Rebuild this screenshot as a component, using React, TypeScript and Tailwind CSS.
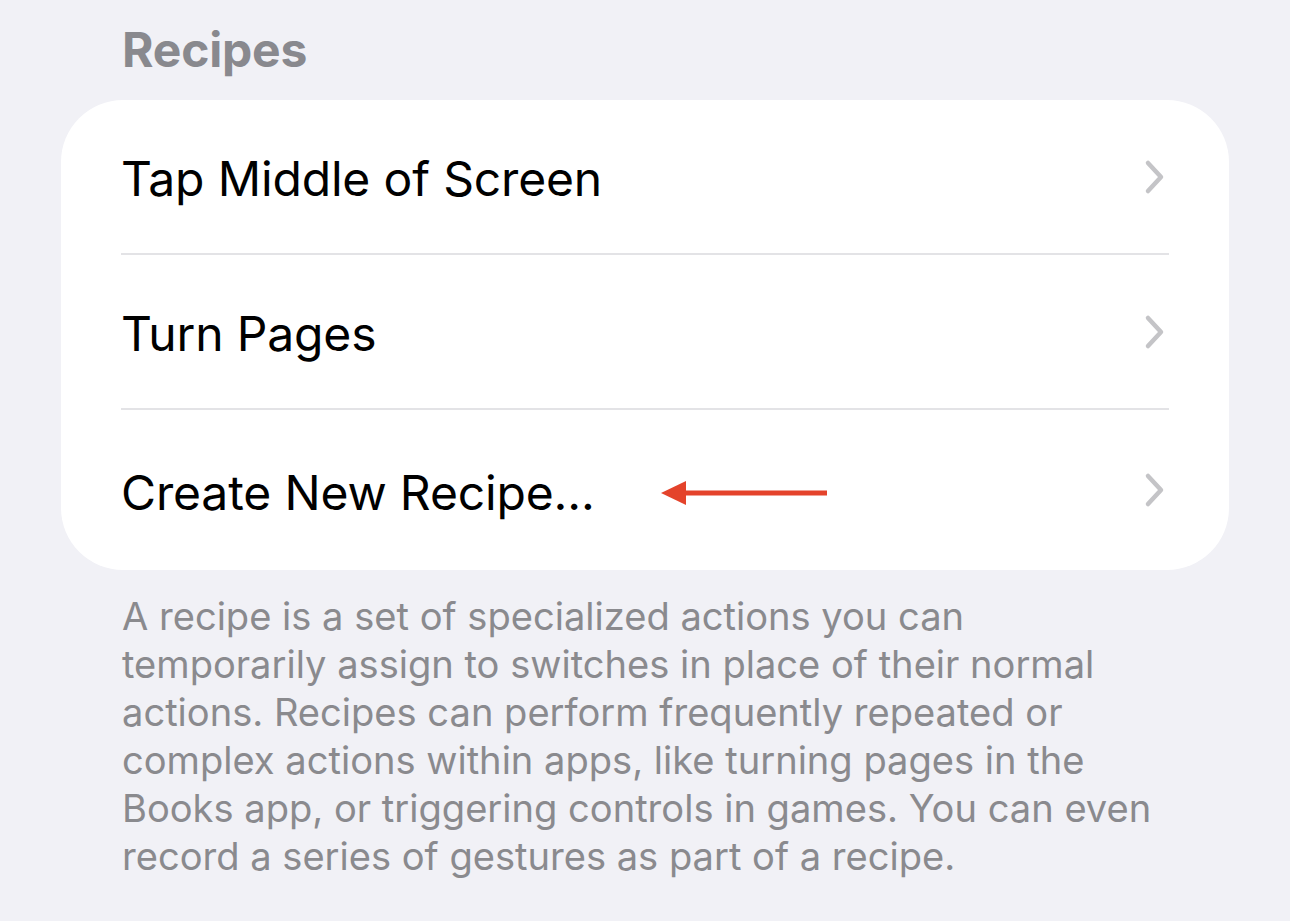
import React from 'react';

const rows = ['Tap Middle of Screen', 'Turn Pages', 'Create New Recipe...'];

const Chevron = () => (
  <svg width="22" height="36" viewBox="0 0 22 36" fill="none">
    <path d="M4 4 L17 18 L4 32" stroke="#c4c4c7" strokeWidth="4.5" strokeLinecap="round" strokeLinejoin="round" />
  </svg>
);

const RedArrow = () => (
  <svg width="168" height="26" viewBox="0 0 168 26" className="ml-[66px]">
    <polygon points="0,13 25,1 25,25" fill="#e4432b" />
    <rect x="22" y="10.5" width="144" height="5" fill="#e4432b" />
  </svg>
);

export default function App() {
  return (
    <div
      className="min-h-[921px] w-[1290px] bg-[#f1f1f6] overflow-hidden"
      style={{ fontFamily: 'Inter, "Noto Sans", sans-serif' }}
    >
      <div className="pt-[22px] pl-[122px] text-[48px] font-bold leading-[56px] text-[#89898e] tracking-[-0.2px]">
        Recipes
      </div>
      <div className="mx-[61px] mt-[22px] rounded-[62px] bg-white px-[60px]">
        {rows.map((label, i) => (
          <div
            key={label}
            className={`flex items-center justify-between pt-[5px] ${i === 2 ? 'h-[160px]' : 'h-[155px] border-b-2 border-[#e3e3e6]'}`}
          >
            <div className="flex items-center">
              <span className="text-[48px] text-black tracking-[-0.15px]">{label}</span>
              {i === 2 && <RedArrow />}
            </div>
            <div className="mr-[3px] -mt-[5px]">
              <Chevron />
            </div>
          </div>
        ))}
      </div>
      <p className="mt-[22px] pl-[122px] pr-[100px] text-[38.1px] leading-[48px] text-[#8a8a8e]">
        A recipe is a set of specialized actions you can
        <br />
        temporarily assign to switches in place of their normal
        <br />
        actions. Recipes can perform frequently repeated or
        <br />
        complex actions within apps, like turning pages in the
        <br />
        Books app, or triggering controls in games. You can even
        <br />
        record a series of gestures as part of a recipe.
      </p>
    </div>
  );
}
